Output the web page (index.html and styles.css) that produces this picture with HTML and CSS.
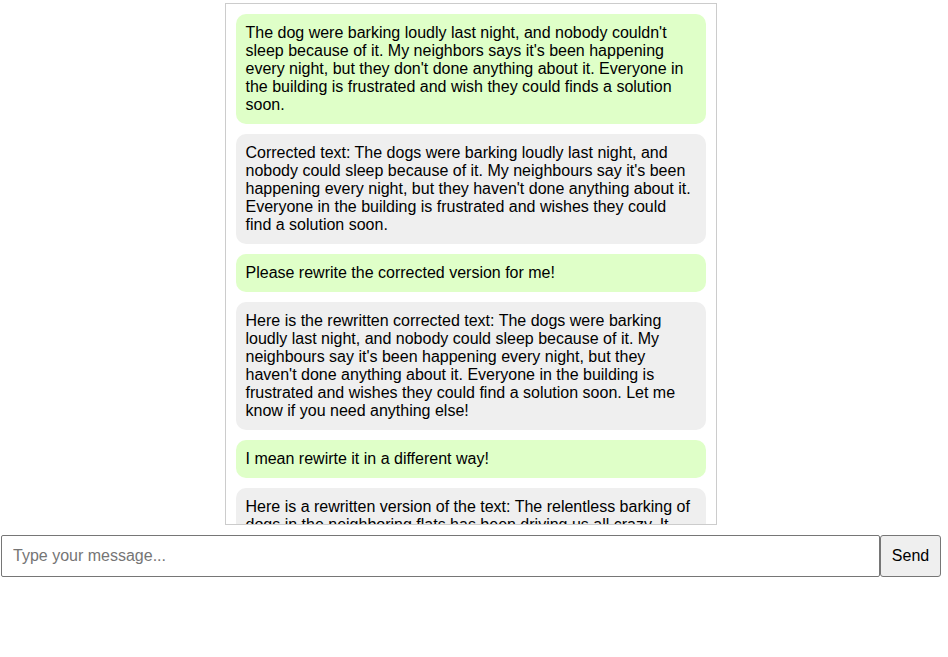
FILE: index.html
```html
<!DOCTYPE html>
<html>
<head>
<meta charset="utf-8">
<link rel="stylesheet" href="styles.css">
</head>
<body>
<div class="page">
  <div class="chat">
    <div class="msg user">The dog were barking loudly last night, and nobody couldn't sleep because of it. My neighbors says it's been happening every night, but they don't done anything about it. Everyone in the building is frustrated and wish they could finds a solution soon.</div>
    <div class="msg bot">Corrected text: The dogs were barking loudly last night, and nobody could sleep because of it. My neighbours say it's been happening every night, but they haven't done anything about it. Everyone in the building is frustrated and wishes they could find a solution soon.</div>
    <div class="msg user">Please rewrite the corrected version for me!</div>
    <div class="msg bot">Here is the rewritten corrected text: The dogs were barking loudly last night, and nobody could sleep because of it. My neighbours say it's been happening every night, but they haven't done anything about it. Everyone in the building is frustrated and wishes they could find a solution soon. Let me know if you need anything else!</div>
    <div class="msg user">I mean rewirte it in a different way!</div>
    <div class="msg bot">Here is a rewritten version of the text: The relentless barking of dogs in the neighboring flats has been driving us all crazy. It seems to go on every single night, and nobody in the building has managed to get a decent night's sleep.</div>
  </div>
  <form class="composer">
    <input class="field" type="text" placeholder="Type your message...">
    <button class="send" type="button">Send</button>
  </form>
</div>
</body>
</html>
```
FILE: styles.css
```css
html, body {
  margin: 0;
  padding: 0;
  background: #ffffff;
}
body {
  font-family: "Liberation Sans", Arial, sans-serif;
  font-size: 16px;
  color: #000;
}
.page {
  width: 941px;
  padding-top: 3px;
}
.chat {
  width: 470px;
  height: 500px;
  margin: 0 auto;
  padding: 10px;
  border: 1px solid #cccccc;
  overflow: hidden;
  display: flex;
  flex-direction: column;
  gap: 10px;
}
.msg {
  flex: none;
  padding: 10px;
  border-radius: 10px;
  line-height: 18px;
}
.user {
  background: #dfffc8;
}
.bot {
  background: #efefef;
}
.composer {
  display: flex;
  margin: 10px 0 0 1px;
  height: 42px;
}
.field {
  flex: 1;
  box-sizing: border-box;
  height: 42px;
  margin: 0;
  padding: 0 11px;
  border: 1px solid #767676;
  border-radius: 2px;
  font-family: "Liberation Sans", Arial, sans-serif;
  font-size: 16px;
  color: #000;
  outline: none;
}
.field::placeholder {
  color: #757575;
}
.send {
  box-sizing: border-box;
  width: 61px;
  height: 42px;
  margin: 0;
  padding: 0;
  border: 1px solid #767676;
  border-radius: 3px;
  background: #efefef;
  font-family: "Liberation Sans", Arial, sans-serif;
  font-size: 16px;
  color: #000;
}
```
